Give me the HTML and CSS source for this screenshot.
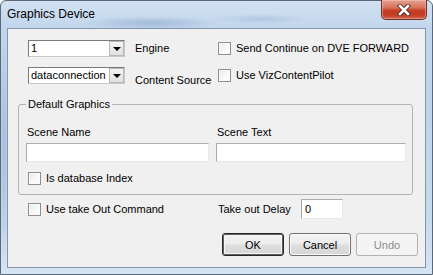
FILE: index.html
```html
<!DOCTYPE html>
<html lang="en">
<head>
    <meta charset="UTF-8">
    <title>Graphics Device</title>
    <link rel="stylesheet" href="styles.css">
</head>
<body>
    <div class="window">
        <div class="titlebar">
            <span class="title">Graphics Device</span>
            <div class="close">
                <svg width="14" height="12" viewBox="0 0 14 12">
                    <path d="M3 2 L11 10 M11 2 L3 10" stroke="#5a2a22" stroke-width="4.4" stroke-linecap="square"/>
                    <path d="M3 2 L11 10 M11 2 L3 10" stroke="#ffffff" stroke-width="2.6" stroke-linecap="square"/>
                </svg>
            </div>
        </div>
        <div class="client">
            <div class="top">
                <div class="combo">
                    <span class="combo-text">1</span>
                    <span class="combo-btn"><i class="arrow"></i></span>
                </div>
                <span class="label">Engine</span>
                <label class="check"><span class="box"></span>Send Continue on DVE FORWARD</label>

                <div class="combo">
                    <span class="combo-text">dataconnection</span>
                    <span class="combo-btn"><i class="arrow"></i></span>
                </div>
                <span class="label low">Content Source</span>
                <label class="check"><span class="box"></span>Use VizContentPilot</label>
            </div>

            <fieldset class="group">
                <legend>Default Graphics</legend>
                <div class="field">
                    <span class="field-label">Scene Name</span>
                    <div class="textbox"></div>
                </div>
                <div class="field">
                    <span class="field-label">Scene Text</span>
                    <div class="textbox"></div>
                </div>
                <label class="check group-check"><span class="box"></span>Is database Index</label>
            </fieldset>

            <div class="bottom">
                <label class="check wide"><span class="box"></span>Use take Out Command</label>
                <div class="delay">
                    <span class="delay-label">Take out Delay</span>
                    <div class="textbox small">0</div>
                </div>
            </div>

            <div class="buttons">
                <button class="btn default">OK</button>
                <button class="btn">Cancel</button>
                <button class="btn disabled">Undo</button>
            </div>
        </div>
    </div>
</body>
</html>
```

FILE: styles.css
```css
*{
    margin: 0px;
    padding: 0px;
    box-sizing: border-box;
}
body{
    font-family: "Liberation Sans", Arial, sans-serif;
    font-size: 11px;
    color: #000000;
    background: #ffffff;
}
.window{
    width: 433px;
    height: 275px;
    display: flex;
    flex-direction: column;
    padding: 0 6px 6px 6px;
    border: 1px solid #5b6878;
    border-radius: 6px 6px 0 0;
    background:
        radial-gradient(ellipse 70px 7px at 150px 22px, rgba(120, 150, 190, 0.45), transparent),
        radial-gradient(ellipse 50px 5px at 260px 18px, rgba(130, 160, 195, 0.3), transparent),
        radial-gradient(ellipse 4px 120px at 3px 150px, rgba(110, 140, 180, 0.35), transparent),
        linear-gradient(to bottom, #d2e1f2 0%, #c2d6ed 10%, #bfd3eb 40%, #c8daee 80%, #d6e4f3 100%);
}
.titlebar{
    height: 27px;
    display: flex;
    align-items: flex-start;
    justify-content: space-between;
    margin: 0 -6px;
    padding-left: 6px;
    padding-right: 5px;
}
.title{
    font-size: 12px;
    line-height: 14px;
    padding-top: 6px;
    color: #000000;
}
.close{
    width: 46px;
    height: 20px;
    margin-top: -1px;
    display: flex;
    align-items: center;
    justify-content: center;
    border: 1px solid #6b3024;
    border-top: none;
    border-radius: 0 0 5px 5px;
    background: linear-gradient(to bottom, #e6a191 0%, #d7735d 40%, #c63f26 55%, #c23a20 75%, #d4604a 100%);
    box-shadow: inset 0 0 0 1px rgba(255, 210, 200, 0.45);
}
.client{
    flex: 1;
    border: 1px solid #8595a9;
    background: #f0f0f0;
}
.top{
    display: grid;
    grid-template-columns: 107px 83px 1fr;
    grid-auto-rows: 17px;
    row-gap: 10px;
    align-items: center;
    margin-top: 11px;
    padding-left: 20px;
}
.combo{
    width: 97px;
    height: 17px;
    display: flex;
    background: #ffffff;
    border: 1px solid;
    border-color: #7a7a7a #c9c9c9 #c9c9c9 #7a7a7a;
}
.combo-text{
    flex: 1;
    padding-left: 2px;
    line-height: 15px;
}
.combo-btn{
    width: 15px;
    margin: 0 0 0 1px;
    display: flex;
    align-items: center;
    justify-content: center;
    border: 1px solid #b8b8b8;
    background: linear-gradient(to bottom, #f4f4f4, #e0e0e0);
}
.arrow{
    width: 0;
    height: 0;
    border-left: 4px solid transparent;
    border-right: 4px solid transparent;
    border-top: 4px solid #000000;
    margin-top: 1px;
}
.label{
    line-height: 13px;
}
.low{
    align-self: end;
    margin-bottom: -3px;
}
.check{
    display: flex;
    align-items: center;
    gap: 5px;
    line-height: 13px;
}
.box{
    width: 13px;
    height: 13px;
    flex: none;
    border: 1px solid #8e8f8f;
    background: linear-gradient(135deg, #e6e8eb 0%, #f7f7f8 50%, #ffffff 100%);
    box-shadow: inset 0 0 0 1px #fafafa;
}
.group{
    width: 395px;
    margin: 14px 0 0 10px;
    padding: 15px 0 9px 7px;
    border: 1px solid #b4b4b4;
    border-radius: 3px;
    display: grid;
    grid-template-columns: 183px 190px;
    column-gap: 7px;
}
.group legend{
    padding: 0 2px;
    line-height: 13px;
}
.field{
    display: flex;
    flex-direction: column;
}
.field-label{
    line-height: 13px;
    padding-left: 1px;
    margin-bottom: 4px;
}
.textbox{
    height: 19px;
    background: #ffffff;
    border: 1px solid;
    border-color: #abadb3 #e3e9ef #e3e9ef #a6a8ae;
    padding-left: 3px;
    line-height: 17px;
}
.small{
    width: 42px;
    height: 20px;
    line-height: 18px;
}
.group-check{
    grid-column: 1 / 3;
    margin-top: 10px;
    padding-left: 2px;
}
.bottom{
    display: grid;
    grid-template-columns: 190px 1fr;
    align-items: center;
    margin-top: 4px;
    padding-left: 20px;
}
.delay{
    display: flex;
    align-items: center;
}
.delay-label{
    width: 83px;
}
.buttons{
    display: flex;
    justify-content: flex-end;
    gap: 5px;
    margin-top: 14px;
    padding-right: 7px;
}
.btn{
    width: 62px;
    height: 23px;
    font-family: inherit;
    font-size: 11px;
    color: #000000;
    border: 1px solid #707070;
    border-radius: 3px;
    background: linear-gradient(to bottom, #f4f4f4 0%, #ececec 45%, #dedede 55%, #d6d6d6 100%);
    box-shadow: inset 0 0 0 1px #fbfbfb;
}
.btn.default{
    border-color: #2a2a2a;
    box-shadow: inset 0 0 0 1px #5e5e5e, inset 0 0 0 2px #f6f6f6;
}
.btn.disabled{
    color: #8c8c8c;
    border-color: #adb2b5;
    background: #f4f4f4;
    box-shadow: none;
}
```
